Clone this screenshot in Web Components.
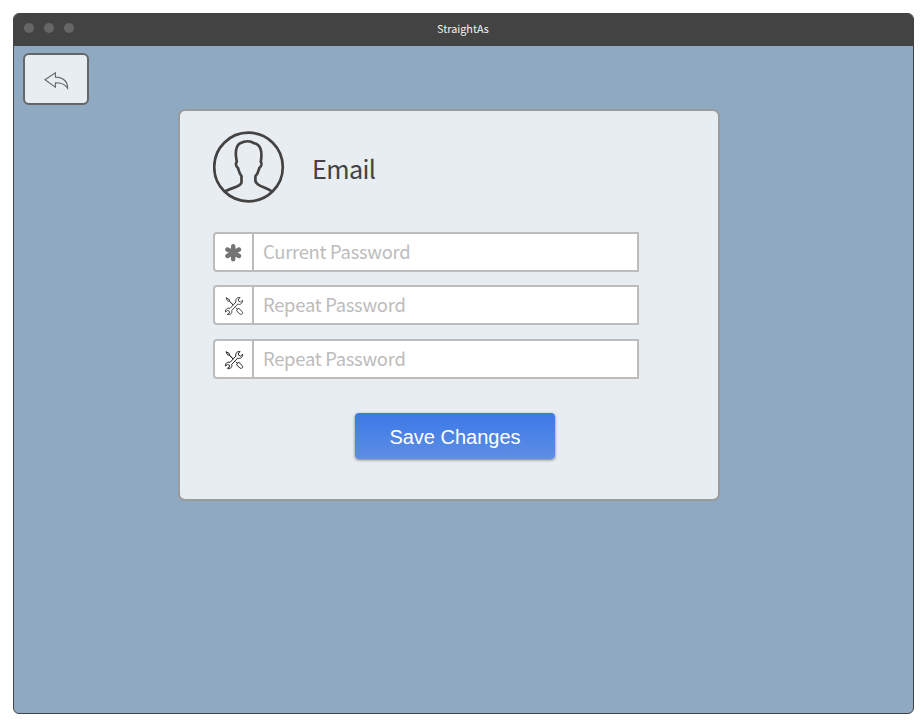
<!DOCTYPE html>
<html lang="en">
<head>
<meta charset="utf-8">
<title>StraightAs</title>
<style>
html,body{margin:0;background:#fff}
body{width:921px;height:724px;padding:13px 0 0 13px;box-sizing:border-box;overflow:hidden;font-family:"Noto Sans CJK SC","Noto Sans",sans-serif;color:#434343}
</style>
</head>
<body>
<app-window label="StraightAs">
  <back-button></back-button>
  <account-card heading="Email">
    <password-field icon="asterisk" hint="Current Password"></password-field>
    <password-field icon="tools" hint="Repeat Password"></password-field>
    <password-field icon="tools" dark hint="Repeat Password" style="margin-top:1px"></password-field>
    <save-button slot="action">Save Changes</save-button>
  </account-card>
</app-window>
<script>
class Base extends HTMLElement {
  connectedCallback() {
    if (!this.shadowRoot) this.attachShadow({mode: 'open'}).innerHTML = this.render();
  }
}

customElements.define('app-window', class extends Base {
  render() { return `<style>
    :host{display:flex;flex-direction:column;box-sizing:border-box;width:901px;height:701px;border:1px solid #434343;border-radius:6px;background:#90a9c3;overflow:hidden}
    header{display:grid;grid-template-columns:1fr auto 1fr;align-items:center;height:32px;flex:none;background:#434343;color:#f2f2f2;font-size:10.8px;line-height:16px}
    header span{padding:0 1px 5px 0}
    .dots{display:block;padding:0 0 4px 10.4px}
    .dots svg{display:block}
    main{display:flex;align-items:flex-start;padding:7px 0 0 9px}
    </style><header><div class="dots"><svg width="52" height="12" viewBox="0 0 52 12" fill="#666"><circle cx="5" cy="6" r="5.1"/><circle cx="25" cy="6" r="5.1"/><circle cx="45" cy="6" r="5.1"/></svg></div><span>${this.getAttribute('label')}</span><b></b></header><main><slot></slot></main>`; }
});

customElements.define('back-button', class extends Base {
  render() { return `<style>
    :host{display:block;flex:none}
    button{display:flex;width:66px;height:52px;padding:0;border:2px solid #666;border-radius:6px;background:#e8edf1;box-sizing:border-box}
    svg{display:block}
    </style><button aria-label="Back"><svg width="62" height="48" viewBox="25 55 62 48" fill="none" stroke="#666" stroke-width="1.1"><path d="M45 79.8 55.4 72.7V77.1C62.7 77.4 67.6 80.8 67.6 88.3C65.2 84.3 61.2 82.7 55.4 82.8V87.2Z"/></svg></button>`; }
});

customElements.define('account-card', class extends Base {
  render() { return `<style>
    :host{display:flex;flex-direction:column;box-sizing:border-box;width:542px;height:392px;margin:56px 0 0 89px;border:2px solid #9b9b9b;border-radius:7px;background:#e8edf1;padding:19px 0 0 33px}
    header{display:flex;height:102px;gap:27px}
    svg{display:block;flex:none}
    h1{margin:19px 0 0;font-size:25.2px;letter-spacing:-.6px;line-height:39px;font-weight:400}
    .fields{display:flex;flex-direction:column;gap:13px}
    .action{margin:34px 0 0 142px}
    </style><header><svg width="72" height="74" viewBox="213 130 72 74" fill="none" stroke="#434343" stroke-width="2.7"><circle cx="248.5" cy="167" r="34.3"/><path d="M225.5 191.4C230.5 187.4 240.5 187.5 241.5 182.6V176.2C238.9 173.3 238.8 169.4 237.8 167.8C236 166.7 235.4 163.5 236.8 161.7C234.8 152 235.6 146 240.2 143.2C245 140.9 250.7 140.9 253.8 143.1C259.8 144 262.8 149.7 260.8 161.7C262 163.6 261.4 166.5 259.4 167.8C258.7 170 258.2 173.5 255.4 176.2V181C256.4 186.5 266.4 187.2 271.8 191.4"/></svg><h1>${this.getAttribute('heading')}</h1></header>
    <div class="fields"><slot></slot></div><div class="action"><slot name="action"></slot></div>`; }
});

const icons = {
  asterisk: `<g stroke="#747474" stroke-width="4.4" stroke-linecap="round"><path d="M233.2 246.2V259.2M227.4 249.5 239 256M239 249.5 227.4 256"/></g>`,
  tools: `<path d="M226 297.7 229.3 299.5 229.5 301.2 233.2 304.8M226 297.7 227.5 300.8 229.3 301.3 233 305M235.8 307.6 237.4 309.3M237 309.5 238.8 308.3 242.3 311.7C243.5 313.4 241.6 315.1 239.8 314L236.6 310.8Z"/><path d="M240.2 297.7C237.2 296.9 235.1 299.2 236 302L230 308.4C227.4 307.5 225 309.3 225.5 312L227.6 310.4 229.5 311.3 229.3 313.3 227.3 314.3C230.1 315.6 232.6 313.1 231.7 310.5L237.7 304.1C240.4 305.2 243.2 302.9 242.5 300.3L240.5 302.1 238.5 301 238.4 299Z"/>`
};
customElements.define('password-field', class extends Base {
  render() {
    const tool = this.getAttribute('icon') === 'tools';
    return `<style>
    :host{display:block}
    label{display:flex;box-sizing:border-box;width:426px;height:40px;border:2px solid #bcbcbc;border-radius:4px 0 0 4px;background:#fff;overflow:hidden}
    span{display:block;width:37px;flex:none;border-right:2px solid #bcbcbc}
    svg{display:block}
    input{flex:1;min-width:0;border:0;outline:0;padding:0 9px 1px;background:transparent;font:18.4px/35px "Noto Sans CJK SC","Noto Sans",sans-serif;letter-spacing:-.27px}
    input::placeholder{color:#bcbcbc;opacity:1}
    </style><label><span><svg width="37" height="36" viewBox="215 ${tool ? 287 : 234} 37 36" fill="none" stroke="${this.hasAttribute('dark') ? '#222' : '#444'}" stroke-width="1" stroke-linejoin="round">${icons[this.getAttribute('icon')]}</svg></span><input placeholder="${this.getAttribute('hint')}"></label>`;
  }
});

customElements.define('save-button', class extends Base {
  render() { return `<style>
    :host{display:block}
    button{display:block;width:200px;height:46px;padding:2px 0 0;border:0;border-radius:4px;background:linear-gradient(#3b78e7,#5e8ee4);box-shadow:0 1px 3px rgba(0,0,0,.5);color:#fff;font:20px "Liberation Sans",Arial,sans-serif}
    </style><button><slot></slot></button>`; }
});
</script>
</body>
</html>
